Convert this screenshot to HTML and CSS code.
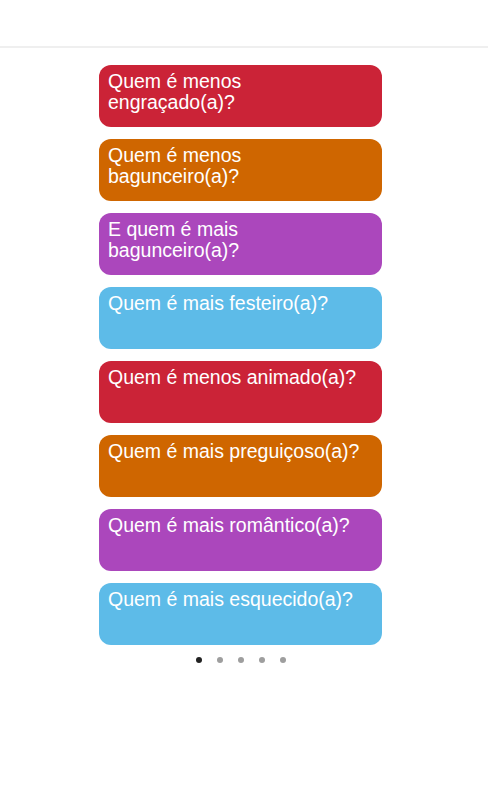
FILE: index.html
```html
<!DOCTYPE html>
<html lang="pt">
<head>
  <meta charset="UTF-8" />
  <meta name="viewport" content="width=device-width, initial-scale=1.0"/>
  <title>Quem é mais</title>
  <link rel="stylesheet" href="styles.css">
</head>
<body>
  <header class="top-bar"></header>

  <div class="container">
    <div class="card-list">
      <div class="card red">Quem é menos engraçado(a)?</div>
      <div class="card orange">Quem é menos bagunceiro(a)?</div>
      <div class="card purple">E quem é mais bagunceiro(a)?</div>
      <div class="card blue">Quem é mais festeiro(a)?</div>
      <div class="card red">Quem é menos animado(a)?</div>
      <div class="card orange">Quem é mais preguiçoso(a)?</div>
      <div class="card purple">Quem é mais romântico(a)?</div>
      <div class="card blue">Quem é mais esquecido(a)?</div>
    </div>
    <div class="dots">
      <span class="dot active"></span>
      <span class="dot"></span>
      <span class="dot"></span>
      <span class="dot"></span>
      <span class="dot"></span>
    </div>
  </div>
</body>
</html>
```

FILE: styles.css
```css
body {
  margin: 0;
  background-color: #ffffff;
  font-family: "Liberation Sans", Arial, sans-serif;
}

.top-bar {
  height: 46px;
  border-bottom: 2px solid #efefef;
}

.container {
  width: 283px;
  margin: 17px 0 0 99px;
}

.card-list {
  display: flex;
  flex-direction: column;
  gap: 12px;
}

.card {
  height: 62px;
  box-sizing: border-box;
  padding: 6px 16px 0 9px;
  border-radius: 12px;
  color: #ffffff;
  font-size: 19.5px;
  line-height: 21px;
}

.red { background-color: #cb2337; }
.orange { background-color: #cf6600; }
.purple { background-color: #ab47bc; }
.blue { background-color: #5dbbe8; }

.dots {
  display: flex;
  justify-content: center;
  gap: 15px;
  margin-top: 12px;
}

.dot {
  width: 6px;
  height: 6px;
  border-radius: 50%;
  background-color: #9e9e9e;
}

.dot.active {
  background-color: #222222;
}
```
